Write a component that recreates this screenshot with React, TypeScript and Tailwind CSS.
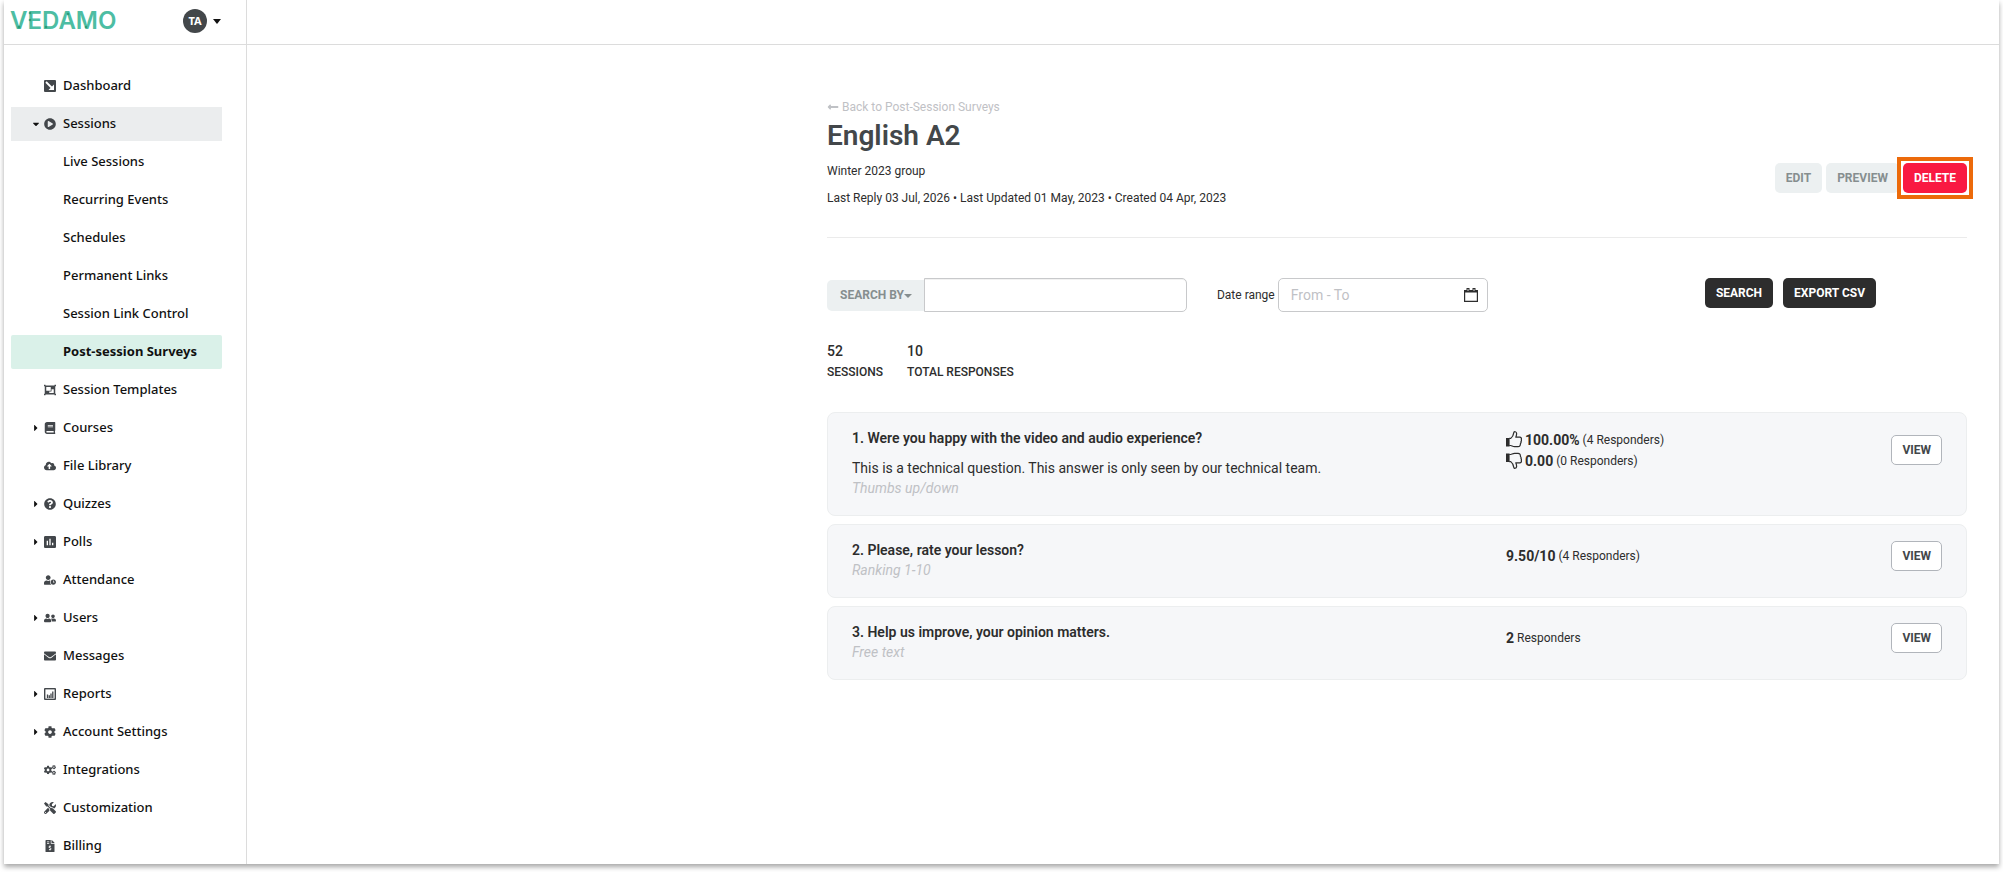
import type { ReactNode } from "react";
import {
  FaBook,
  FaCaretDown,
  FaCaretRight,
  FaCloudUploadAlt,
  FaCog,
  FaCogs,
  FaEnvelope,
  FaFileInvoiceDollar,
  FaLongArrowAltLeft,
  FaObjectGroup,
  FaPlayCircle,
  FaQuestionCircle,
  FaTools,
  FaUserClock,
  FaUserFriends,
} from "react-icons/fa";
import { MdInsertChart } from "react-icons/md";

type NavItem = {
  label: string;
  icon?: ReactNode;
  arrow?: "right" | "down";
  state?: "open" | "active";
};

type Stat = { icon?: ReactNode; value: string; note: string };

type Question = {
  title: string;
  description?: string;
  kind: string;
  stats: Stat[];
};

function DashboardIcon() {
  return (
    <svg viewBox="0 0 12 12" className="size-3" aria-hidden="true">
      <rect width="12" height="12" rx="1" fill="currentColor" />
      <path d="M2 2 8.5 8.5" stroke="#fff" strokeWidth="1.8" />
      <path d="M10 4.5V10H4.5z" fill="#fff" />
    </svg>
  );
}

function ReportsIcon() {
  return (
    <svg viewBox="0 0 12 12" className="size-3 shrink-0" aria-hidden="true">
      <rect width="12" height="12" rx="1" fill="currentColor" />
      <rect x="1.4" y="1.4" width="9.2" height="9.2" fill="#fff" />
      <path
        d="M3.5 10V6.500M5.300 10V7.200M7 10V5.500M8.800 10V3.500"
        stroke="currentColor"
        strokeWidth="1.3"
      />
    </svg>
  );
}

function ThumbIcon({ down }: { down?: boolean }) {
  return (
    <svg
      viewBox="0 0 16 17"
      className={down ? "h-[17px] w-4 -scale-y-100" : "h-[17px] w-4"}
      aria-hidden="true"
    >
      <path d="M0 7h3.6v8.5H0z" fill="#2d2d2d" />
      <path
        d="M3.2 7.4h1.6C6.6 6 7.4 4.3 7.8 1.6 8 .3 10.4.3 10.6 2.4c.1 1.4-.3 2.6-.8 3.8h4c1.3 0 1.9 1 1.5 2.1.3.8.2 1.6-.3 2.2.2.8 0 1.6-.6 2.2.1 1.8-.7 2.9-2.4 2.9H8.5c-1.6 0-2.6-.9-3.8-1.1H3.2"
        fill="none"
        stroke="#2d2d2d"
        strokeWidth="1.2"
        strokeLinejoin="round"
      />
    </svg>
  );
}

function CalendarIcon() {
  return (
    <svg viewBox="0 0 14 14" className="size-[14px]" aria-hidden="true">
      <path
        d="M.6 2.6h12.8v10.8H.6z"
        fill="none"
        stroke="#2d2d2d"
        strokeWidth="1.2"
      />
      <path d="M0 2h14v2.5H0zM2.5 0h3v3h-3zM8.5 0h3v3h-3z" fill="#2d2d2d" />
      <path d="M4 1v2M10 1v2" stroke="#fff" strokeWidth="0.8" />
    </svg>
  );
}

function Logo() {
  return (
    <svg
      viewBox="0 0 108 32"
      className="h-8 w-[108px]"
      role="img"
      aria-label="VEDAMO"
    >
      <text
        x="0"
        y="24"
        fill="#4dbda3"
        className="font-['Inter'] text-[24px] font-semibold"
      >
        VEDAMO
      </text>
      <g fill="#24936c" fillOpacity="0.8">
        <circle cx="9" cy="22" r="1.5" />
        <circle cx="20" cy="15" r="1.3" />
        <circle cx="20" cy="8" r="1.3" />
        <circle cx="36" cy="22" r="1.3" />
        <circle cx="58" cy="9" r="1.3" />
        <circle cx="76" cy="22" r="1.3" />
      </g>
    </svg>
  );
}

const navItems: NavItem[] = [
  { label: "Dashboard", icon: <DashboardIcon /> },
  { label: "Sessions", icon: <FaPlayCircle />, arrow: "down", state: "open" },
  { label: "Live Sessions" },
  { label: "Recurring Events" },
  { label: "Schedules" },
  { label: "Permanent Links" },
  { label: "Session Link Control" },
  { label: "Post-session Surveys", state: "active" },
  { label: "Session Templates", icon: <FaObjectGroup /> },
  { label: "Courses", icon: <FaBook />, arrow: "right" },
  { label: "File Library", icon: <FaCloudUploadAlt /> },
  { label: "Quizzes", icon: <FaQuestionCircle />, arrow: "right" },
  {
    label: "Polls",
    icon: <MdInsertChart className="size-4 shrink-0" />,
    arrow: "right",
  },
  { label: "Attendance", icon: <FaUserClock /> },
  { label: "Users", icon: <FaUserFriends />, arrow: "right" },
  { label: "Messages", icon: <FaEnvelope /> },
  { label: "Reports", icon: <ReportsIcon />, arrow: "right" },
  { label: "Account Settings", icon: <FaCog />, arrow: "right" },
  { label: "Integrations", icon: <FaCogs /> },
  { label: "Customization", icon: <FaTools /> },
  { label: "Billing", icon: <FaFileInvoiceDollar /> },
];

const questions: Question[] = [
  {
    title: "1. Were you happy with the video and audio experience?",
    description:
      "This is a technical question. This answer is only seen by our technical team.",
    kind: "Thumbs up/down",
    stats: [
      { icon: <ThumbIcon />, value: "100.00%", note: "(4 Responders)" },
      { icon: <ThumbIcon down />, value: "0.00", note: "(0 Responders)" },
    ],
  },
  {
    title: "2. Please, rate your lesson?",
    kind: "Ranking 1-10",
    stats: [{ value: "9.50/10", note: "(4 Responders)" }],
  },
  {
    title: "3. Help us improve, your opinion matters.",
    kind: "Free text",
    stats: [{ value: "2", note: "Responders" }],
  },
];

function NavLink({ item }: { item: NavItem }) {
  const tone =
    item.state === "active"
      ? "rounded-xs bg-[#daf1e9] font-bold"
      : item.state === "open"
        ? "bg-[#ebedee] font-medium"
        : "font-medium";

  return (
    <a href="#" className={`flex h-[34px] items-center pl-5 ${tone}`}>
      <span className="flex w-[13px] text-[10px]">
        {item.arrow === "right" && <FaCaretRight />}
        {item.arrow === "down" && <FaCaretDown />}
      </span>
      <span className="mr-[7px] flex size-3 items-center justify-center text-xs text-[#43474b]">
        {item.icon}
      </span>
      {item.label}
    </a>
  );
}

function Sidebar() {
  return (
    <aside className="w-[243px] shrink-0 border-r border-[#dcdcdc] font-['Noto_Sans',sans-serif] text-[13px] text-[#111]">
      <div className="flex h-[45px] items-center justify-between border-b border-[#dcdcdc] pr-[25px] pb-0.5 pl-1.5">
        <Logo />
        <button type="button" className="flex items-center gap-1.5">
          <span className="flex size-6 items-center justify-center rounded-full bg-[#43474a] text-[11px] font-bold text-white">
            TA
          </span>
          <svg viewBox="0 0 8 5" className="h-[5px] w-2" aria-hidden="true">
            <path d="M0 0h8L4 5z" fill="#111" />
          </svg>
        </button>
      </div>
      <nav className="flex flex-col gap-1 pt-6 pr-6 pb-px pl-[7px]">
        {navItems.map((item) => (
          <NavLink key={item.label} item={item} />
        ))}
      </nav>
    </aside>
  );
}

function QuestionCard({ question }: { question: Question }) {
  const { title, description, kind, stats } = question;

  return (
    <li className="grid grid-cols-[60%_1fr_auto] items-start rounded-lg border border-[#eceeef] bg-[#f6f7f9] px-6 pt-[15px] pb-[17px]">
      <div className="text-sm/5">
        <h2 className="font-semibold">{title}</h2>
        {description && <p className="mt-2.5">{description}</p>}
        <p className="text-[#bfc1c5] italic">{kind}</p>
      </div>
      <div className={stats.length > 1 ? "pt-px" : "pt-[5px]"}>
        {stats.map((stat) => (
          <p
            key={stat.value}
            className="flex h-[21px] items-center gap-[3px] text-xs"
          >
            {stat.icon}
            <span className="text-sm font-bold">{stat.value}</span>
            {stat.note}
          </p>
        ))}
      </div>
      <button
        type="button"
        className={`h-[30px] rounded-[5px] border border-[#b1b5bb] bg-white px-2.5 text-xs font-bold text-[#43474a] ${
          stats.length > 1 ? "mt-[7px]" : "mt-px"
        }`}
      >
        VIEW
      </button>
    </li>
  );
}

export default function App() {
  return (
    <div className="px-1 pb-2 font-['Roboto',sans-serif] text-[#2d2d2d]">
      <div className="flex bg-white shadow-[0_3px_5px_rgba(0,0,0,0.35)]">
        <Sidebar />

        <div className="min-w-0 flex-1">
          <header className="h-[45px] border-b border-[#dcdcdc]" />

          <main className="mr-8 ml-auto max-w-[1140px] pt-[54px]">
            <section className="flex items-end justify-between border-b border-[#ebebeb] pb-[31px]">
              <div className="text-xs/4">
                <a
                  href="#"
                  className="flex items-center gap-[3px] text-[#bfc1c5]"
                >
                  <FaLongArrowAltLeft className="size-3" />
                  Back to Post-Session Surveys
                </a>
                <h1 className="mt-[3px] text-[28px]/9 font-semibold text-[#43474a]">
                  English A2
                </h1>
                <p className="mt-[9px]">Winter 2023 group</p>
                <p className="mt-[11px]">
                  Last Reply 03 Jul, 2026 • Last Updated 01 May, 2023 • Created
                  04 Apr, 2023
                </p>
              </div>

              <div className="mb-[13px] flex gap-1 text-xs font-bold">
                <button
                  type="button"
                  className="h-[30px] rounded-[5px] bg-[#ecf0f1] px-[11px] text-[#868e8f]"
                >
                  EDIT
                </button>
                <button
                  type="button"
                  className="h-[30px] rounded-[5px] bg-[#ecf0f1] px-[11px] text-[#868e8f]"
                >
                  PREVIEW
                </button>
                <div className="relative">
                  <span className="absolute -inset-1.5 border-4 border-[#ec6a0a] bg-white" />
                  <button
                    type="button"
                    className="relative h-[30px] rounded-[5px] bg-[#f91942] px-[11px] text-white"
                  >
                    DELETE
                  </button>
                </div>
              </div>
            </section>

            <form className="mt-10 flex items-start text-xs">
              <div className="flex items-center">
                <button
                  type="button"
                  className="flex h-[31px] items-center rounded-l-[5px] bg-[#ecf0f1] pr-3 pl-[13px] font-bold text-[#868e8f]"
                >
                  SEARCH BY
                  <svg
                    viewBox="0 0 8 4"
                    className="mt-0.5 h-1 w-2"
                    aria-hidden="true"
                  >
                    <path d="M0 0h8L4 4z" fill="currentColor" />
                  </svg>
                </button>
                <input
                  type="text"
                  aria-label="Search"
                  className="h-[34px] w-[263px] rounded-r-[5px] border border-[#c8c9cb] px-3 text-sm inset-shadow-2xs"
                />
              </div>
              <div className="ml-[30px] flex items-center gap-[3px]">
                <label htmlFor="range">Date range</label>
                <div className="flex h-[34px] w-[210px] items-center rounded-[5px] border border-[#c8c9cb] pr-[9px] pl-3">
                  <input
                    id="range"
                    type="text"
                    placeholder="From - To"
                    className="min-w-0 flex-1 text-sm outline-none placeholder:text-[#bfc1c5]"
                  />
                  <CalendarIcon />
                </div>
              </div>
              <div className="mr-[91px] ml-auto flex gap-2.5 font-bold text-white">
                <button
                  type="submit"
                  className="h-[30px] rounded-[5px] bg-[#2d2d2d] px-[11px]"
                >
                  SEARCH
                </button>
                <button
                  type="button"
                  className="h-[30px] rounded-[5px] bg-[#2d2d2d] px-[11px]"
                >
                  EXPORT CSV
                </button>
              </div>
            </form>

            <dl className="mt-[29px] flex gap-6 text-xs/5 font-medium">
              <div className="flex flex-col-reverse gap-px">
                <dt>SESSIONS</dt>
                <dd className="text-sm/5">52</dd>
              </div>
              <div className="flex flex-col-reverse gap-px">
                <dt>TOTAL RESPONSES</dt>
                <dd className="text-sm/5">10</dd>
              </div>
            </dl>

            <ul className="mt-[30px] flex flex-col gap-2">
              {questions.map((question) => (
                <QuestionCard key={question.title} question={question} />
              ))}
            </ul>
          </main>
        </div>
      </div>
    </div>
  );
}
